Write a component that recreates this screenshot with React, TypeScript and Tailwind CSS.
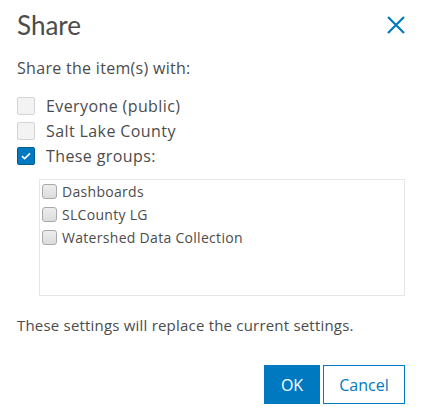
import React, { useState } from "react";

const groups = ["Dashboards", "SLCounty LG", "Watershed Data Collection"];

function BigCheck({ checked }: { checked: boolean }) {
  return (
    <span
      className={
        "flex h-[18px] w-[18px] shrink-0 items-center justify-center rounded-[2px] border " +
        (checked ? "border-[#005e95] bg-[#0079c1]" : "border-[#d4d4d4] bg-[#f3f3f3]")
      }
    >
      {checked && (
        <svg width="12" height="10" viewBox="0 0 12 10" fill="none">
          <path d="M2 5.2 4.6 7.6 10 2.4" stroke="white" strokeWidth="1.6" />
        </svg>
      )}
    </span>
  );
}

export default function App() {
  const [choice, setChoice] = useState<string>("groups");
  const [picked, setPicked] = useState<string[]>([]);

  const toggle = (g: string) =>
    setPicked((prev) => (prev.includes(g) ? prev.filter((x) => x !== g) : [...prev, g]));

  return (
    <div className="h-[418px] w-[427px] bg-white pl-[17px] pr-[22px] text-[#4c4c4c] font-['Open_Sans','Noto_Sans',sans-serif]">
      {/* Header */}
      <div className="flex items-start justify-between pt-[7px]">
        <h1 className="text-[26px] leading-[36px] font-normal font-['Lato',sans-serif]">Share</h1>
        <button className="mt-[9px] text-[#0079c1]" aria-label="Close">
          <svg width="18" height="18" viewBox="0 0 18 18" fill="none">
            <path d="M1 1 17 17M17 1 1 17" stroke="currentColor" strokeWidth="2.2" />
          </svg>
        </button>
      </div>

      <p className="mt-[15px] text-[16px] leading-[20px] tracking-[0.3px]">Share the item(s) with:</p>

      {/* Options */}
      <div className="mt-[19px] flex flex-col gap-[7px]">
        {[
          { id: "everyone", label: "Everyone (public)" },
          { id: "org", label: "Salt Lake County" },
          { id: "groups", label: "These groups:" },
        ].map((o) => (
          <label
            key={o.id}
            className="flex h-[18px] cursor-pointer items-center gap-[11px] text-[16px] tracking-[0.4px]"
            onClick={() => setChoice(o.id)}
          >
            <BigCheck checked={choice === o.id} />
            <span>{o.label}</span>
          </label>
        ))}
      </div>

      {/* Group list */}
      <div className="mt-[14px] ml-[22px] h-[117px] w-[366px] border border-[#e6e6e6] pl-[2px]">
        {groups.map((g) => (
          <label
            key={g}
            className="flex h-[23px] cursor-pointer items-center gap-[5px] text-[14px] tracking-[0.3px]"
            onClick={() => toggle(g)}
          >
            <span
              className={
                "h-[15px] w-[15px] shrink-0 rounded-[3px] border border-[#a9a9a9] " +
                (picked.includes(g) ? "bg-[#0079c1]" : "bg-gradient-to-b from-[#ededed] to-[#dcdcdc]")
              }
            />
            <span>{g}</span>
          </label>
        ))}
      </div>

      <p className="mt-[19px] text-[15px] leading-[20px] tracking-[0.2px]">
        These settings will replace the current settings.
      </p>

      {/* Footer */}
      <div className="mt-[30px] flex justify-end gap-[3px]">
        <button className="h-[39px] w-[56px] bg-[#0079c1] text-[16px] text-white">OK</button>
        <button className="h-[39px] w-[82px] border border-[#0079c1] bg-white text-[16px] text-[#0079c1]">
          Cancel
        </button>
      </div>
    </div>
  );
}
